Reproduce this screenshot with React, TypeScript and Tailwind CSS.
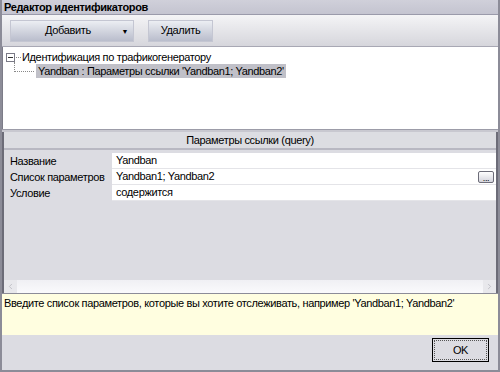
import { ChevronLeft, ChevronRight } from 'lucide-react'

const font = { fontFamily: '"Liberation Sans", Arial, sans-serif' }

function ToolButton({ children, w }: { children: React.ReactNode; w: string }) {
  return (
    <div
      className={`${w} h-[22px] relative flex items-center justify-center text-[11px] text-black border border-[#c4c6d2] bg-gradient-to-b from-[#eceef3] via-[#d2d5df] to-[#b9bdcc]`}
    >
      {children}
    </div>
  )
}

export default function App() {
  return (
    <div className="w-[500px] h-[372px] bg-[#dcdce2] flex flex-col border-l-2 border-r-2 border-b-2 border-[#8c8c98] overflow-hidden tracking-[-0.35px]" style={font}>
      {/* title */}
      <div className="h-[15px] shrink-0 flex items-center px-[2px] bg-gradient-to-b from-[#d0d0da] to-[#c4c4d0] border-b border-[#9a9aaa]">
        <span className="text-[11px] font-bold text-black leading-none">Редактор идентификаторов</span>
      </div>

      {/* toolbar */}
      <div className="h-[32px] shrink-0 flex items-center gap-[14px] pl-[8px] bg-gradient-to-b from-[#f4f4f6] to-[#d6d6dc] border-b border-[#a8a8b4]">
        <ToolButton w="w-[124px]">
          <span className="mr-[8px]">Добавить</span>
          <span className="absolute right-[5px] top-[6px] text-[7px]">▼</span>
        </ToolButton>
        <ToolButton w="w-[65px]">Удалить</ToolButton>
      </div>

      {/* tree */}
      <div className="h-[82px] shrink-0 bg-white border-l border-[#7c7c88] text-[11px] text-black pt-[4px] relative">
        <div className="flex items-center h-[13px] pl-[3px]">
          <span className="w-[9px] h-[9px] border border-[#7a7a86] flex items-center justify-center mr-[1px]">
            <span className="w-[5px] h-px bg-[#333]" />
          </span>
          <span className="w-[5px] border-t border-dotted border-[#888] mr-[1px]" />
          <span>Идентификация по трафикогенератору</span>
        </div>
        <div className="flex items-end h-[14px] pl-[11px]">
          <span className="w-[20px] h-[10px] border-l border-b border-dotted border-[#888] mb-[6px] mr-[2px]" />
          <span className="bg-[#c0c0c8] px-[2px] h-[14px] flex items-center">Yandban : Параметры ссылки 'Yandban1; Yandban2'</span>
        </div>
      </div>

      {/* splitter */}
      <div className="h-[3px] shrink-0 bg-[#c8c8d0] border-t border-[#9c9ca8]" />

      {/* property grid */}
      <div className="h-[161px] shrink-0 flex flex-col border-l-2 border-r-2 border-[#6c6c78] bg-[#dcdce2] text-[11px] text-black">
        <div className="h-[18px] shrink-0 flex items-center justify-center pt-[1px] bg-[#dcdde2] border-b-2 border-[#b8b8c2]">
          Параметры ссылки (query)
        </div>
        <div className="pt-[3px] flex flex-col">
          {[
            ['Название', 'Yandban', false],
            ['Список параметров', 'Yandban1; Yandban2', true],
            ['Условие', 'содержится', false],
          ].map(([label, value, btn]) => (
            <div key={label as string} className="flex h-[16px]">
              <div className="w-[108px] pl-[6px] flex items-center">{label}</div>
              <div className="flex-1 bg-white border-b border-[#e4e4e8] flex items-center pl-[4px] pr-[2px]">
                <span>{value}</span>
                {btn && (
                  <span className="ml-auto w-[16px] h-[12px] border border-[#6c6c78] rounded-[2px] bg-gradient-to-b from-white to-[#d4d4dc] flex items-end justify-center text-[9px] leading-[8px]">
                    ...
                  </span>
                )}
              </div>
            </div>
          ))}
        </div>
        <div className="flex-1" />
        {/* horizontal scrollbar */}
        <div className="h-[13px] shrink-0 flex items-center justify-between bg-gradient-to-b from-[#f0f0f4] to-[#fafafc]">
          <span className="w-[13px] h-[13px] flex items-center justify-center bg-[#e8e8ec]">
            <ChevronLeft size={9} color="#b4b4bc" strokeWidth={2} />
          </span>
          <span className="w-[13px] h-[13px] flex items-center justify-center bg-[#e8e8ec]">
            <ChevronRight size={9} color="#b4b4bc" strokeWidth={2} />
          </span>
        </div>
      </div>

      {/* description */}
      <div className="h-[42px] shrink-0 bg-[#fffee0] border-t border-[#8c8c98] text-[11px] text-black px-[2px] pt-[1px]">
        Введите список параметров, которые вы хотите отслеживать, например 'Yandban1; Yandban2'
      </div>

      {/* footer */}
      <div className="flex-1 flex items-start justify-end pr-[9px] pt-[3px]">
        <div className="w-[57px] h-[24px] border border-black bg-[#dcdce2] p-[1px]">
          <div className="w-full h-full border border-dotted border-[#555] flex items-center justify-center text-[11px] text-black">
            OK
          </div>
        </div>
      </div>
    </div>
  )
}
